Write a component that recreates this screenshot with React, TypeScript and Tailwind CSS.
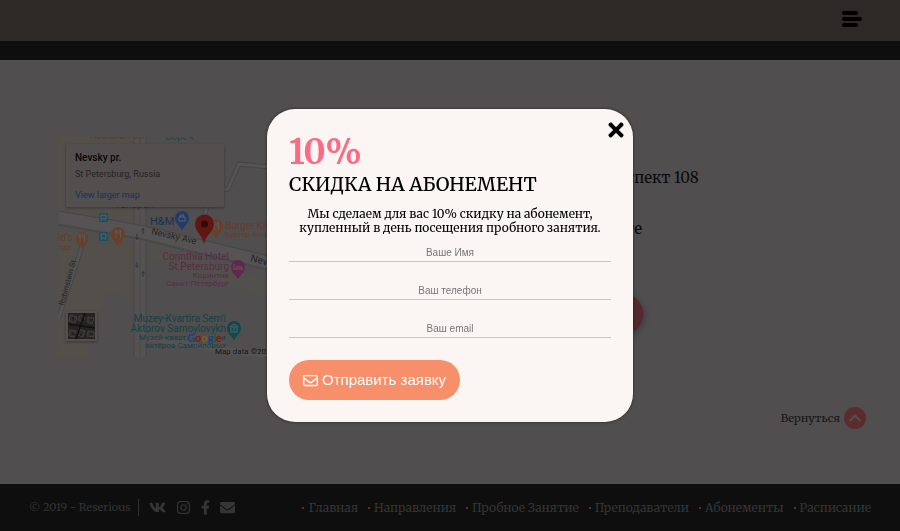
import type { ReactNode } from "react";
import { FaVk, FaInstagram, FaFacebookF, FaEnvelope, FaRegEnvelope, FaTimes, FaChevronUp } from "react-icons/fa";

const serif = "font-['Merriweather','DejaVu_Serif_Condensed','DejaVu_Serif',serif]";
const sans = "font-['Liberation_Sans',Arial,sans-serif]";

function Pin({ x, y, r, fill, children }: { x: number; y: number; r: number; fill: string; children?: ReactNode }) {
  return (
    <g transform={`translate(${x} ${y})`}>
      <path d={`M0 ${r * 1.75} C${-r * 0.3} ${r * 1.1} ${-r} ${r * 0.8} ${-r} 0 A${r} ${r} 0 0 1 ${r} 0 C${r} ${r * 0.8} ${r * 0.3} ${r * 1.1} 0 ${r * 1.75}Z`} fill={fill} />
      {children}
    </g>
  );
}

function Food() {
  return <path d="M-3 -4v3M-1 -4v3M-2 -4v8M-3 -1h2M2.500 4v-8c-2 1-2 3-1.500 4h1.500" stroke="#5d5654" strokeWidth="1" fill="none" />;
}

function Bus({ x, y }: { x: number; y: number }) {
  return (
    <g transform={`translate(${x} ${y})`}>
      <rect width="9" height="9" rx="1" fill="#1d4e5c" />
      <path d="M2 2h5v4h-5zM2.500 7v1M6.500 7v1" stroke="#58656a" strokeWidth="1" fill="none" />
    </g>
  );
}

function StreetMap() {
  return (
    <svg viewBox="58 137 280 220" className="h-[220px] w-[280px] shrink-0 font-[Roboto,sans-serif]" role="img" aria-label="Nevsky pr., St Petersburg">
      <defs>
        <clipPath id="map-area"><rect x="58" y="137" width="280" height="220" /></clipPath>
        <filter id="card-shadow" x="-10%" y="-20%" width="120%" height="150%">
          <feDropShadow dx="0" dy="1" stdDeviation="1.500" floodColor="#000" floodOpacity="0.35" />
        </filter>
      </defs>
      <g clipPath="url(#map-area)">
        <rect x="58" y="137" width="280" height="220" fill="#504e4e" />
        <path d="M58 137h76v96l-76-20zM58 228l76 22v50l-28-8-20 65H58z" fill="#53504b" />
        <path d="M147 240l120 40v18l-120-40z" fill="#52504c" />
        <g fill="none">
          <path d="M140 137V357" stroke="#474546" strokeWidth="13" />
          <path d="M140 137V357" stroke="#545253" strokeWidth="11" />
          <path d="M140 137V357" stroke="#4a4849" strokeWidth="1" />
          <path d="M58 218L140 232 338 280" stroke="#474546" strokeWidth="15" />
          <path d="M58 218L140 232 338 280" stroke="#555354" strokeWidth="13" />
          <path d="M58 224L140 238 338 286" stroke="#4b494a" strokeWidth="1" />
          <path d="M84 240L58 320M204 220L210 190 228 189 239 164 280 168" stroke="#474546" strokeWidth="5" />
          <path d="M84 240L58 320M204 220L210 190 228 189 239 164 280 168" stroke="#555354" strokeWidth="3" />
          <path d="M145 338L270 356" stroke="#555354" strokeWidth="6" />
        </g>
        <path d="M137 234v5m-1.500-1.500l1.500 2 1.500-2M143 234v-5m-1.500 1.500l1.500-2 1.500 2M137 262v5m-1.500-1.500l1.500 2 1.500-2M143 277v-5m-1.500 1.500l1.500-2 1.500 2" stroke="#33333b" fill="none" />
        <g fontSize="10">
          <text x="90" y="139" fill="#5b3c2c">Restoran Gp</text>
          <text x="165" y="140" fill="#24494d">Вореч</text>
          <text x="116" y="208" fill="#542944">Галерея</text>
        </g>

        <rect x="66" y="144" width="158" height="63" rx="1" fill="#525050" filter="url(#card-shadow)" />
        <text x="75" y="161" fontSize="10" fontWeight="500" fill="#080808">Nevsky pr.</text>
        <text x="75" y="177" fontSize="9" fill="#242323">St Petersburg, Russia</text>
        <text x="75" y="198" fontSize="9" fill="#17305b">View larger map</text>

        <Bus x={99} y={213} />
        <Bus x={99} y={232} />
        <text x="150" y="225" fontSize="11" fill="#1d2f52">H&amp;M</text>
        <Pin x={182} y={218} r={7} fill="#203c68"><path d="M-3 -1h6v4h-6zM-1.500 -1v-2h3v2" stroke="#59606d" fill="none" /></Pin>
        <Pin x={82} y={238} r={6} fill="#694027"><Food /></Pin>
        <Pin x={118} y={234} r={7} fill="#694027"><Food /></Pin>
        <Pin x={216} y={226} r={7} fill="#694027"><Food /></Pin>
        <text x="58" y="241" fontSize="10" fill="#633d29">ld's</text>
        <text x="58" y="250" fontSize="8" fill="#633d29">лдс</text>
        <text x="225" y="229" fontSize="10" fill="#633d29">Burger King</text>
        <text x="225" y="237" fontSize="8" fill="#633d29">Бургер Кинг</text>
        <text transform="translate(151 234) rotate(13)" fontSize="9" fill="#262626">Nevsky Ave</text>
        <text transform="translate(250 261) rotate(15)" fontSize="10" fill="#262626">Nevsky Ave</text>
        <path d="M204 244C202 234 195 232 195 224A9.500 9.500 0 0 1 214 224C214 232 206 234 204 244Z" fill="#601713" />
        <circle cx="204.500" cy="224" r="3.500" fill="#2d0908" />

        <g textAnchor="end" fill="#5b2b48">
          <text x="229" y="260" fontSize="10">Corinthia Hotel</text>
          <text x="229" y="270" fontSize="10">St Petersburg</text>
          <text x="229" y="278" fontSize="8">Коринтия</text>
          <text x="229" y="286" fontSize="8">Санкт-Петербург</text>
        </g>
        <Pin x={238} y={267} r={7} fill="#60294b"><path d="M-4 -3v6M-4 2h8v1.500M-2 0h6v2" stroke="#6b5263" fill="none" /></Pin>
        <text transform="translate(64 306) rotate(-75)" fontSize="8" fill="#292828">Rubinstein St</text>

        <g filter="url(#card-shadow)">
          <rect x="66" y="311" width="31" height="30" rx="1" fill="#525050" />
          <rect x="68" y="313" width="27" height="26" fill="#252424" />
          <path d="M70 315l7 2-2 6-6-2zM80 315l5 2-2 5-5-2zM88 317l6 1-2 6-5-2zM70 330l6 1-2 6-5-1zM79 329l6 2-2 6-6-2zM88 331l6 1v5l-7-1z" fill="#2f2d2d" stroke="#413e3d" strokeWidth="1" />
          <path d="M73 317v4M82 318l2 3M90 320h3M72 333l3 2M81 333v3M90 334h3" stroke="#151515" />
          <path d="M68 324l27 4M85 313l-9 26" stroke="#111" strokeWidth="1.500" />
        </g>

        <g fill="#134348">
          <text x="226" y="322" fontSize="10" textAnchor="end">Muzey-Kvartira Sem'i</text>
          <text x="226" y="332" fontSize="10" textAnchor="end">Aktorov Samoylovykh</text>
          <text x="139" y="340" fontSize="8">Музей-кварт</text>
          <text x="221" y="340" fontSize="8">и</text>
          <text x="226" y="348" fontSize="8" textAnchor="end">актёров Самойловых</text>
        </g>
        <Pin x={234} y={328} r={7} fill="#12484d"><path d="M-4 -1l4-3 4 3zM-3 3v-3M0 3v-3M3 3v-3M-4 4h8" stroke="#52666a" fill="none" /></Pin>
        <text x="187" y="342" fontSize="11" fontWeight="700" className="font-['Lato',sans-serif]">
          <tspan fill="#1d4080">G</tspan><tspan fill="#7a1b19">o</tspan><tspan fill="#806010">o</tspan><tspan fill="#1d4080">g</tspan><tspan fill="#1b602b">l</tspan><tspan fill="#7a1b19">e</tspan>
        </text>
        <text x="215" y="354" fontSize="8" fill="#151515">Map data ©2020 Google</text>
      </g>
    </svg>
  );
}

const links = ["Главная", "Направления", "Пробное Занятие", "Преподаватели", "Абонементы", "Расписание"];
const fields = [
  { id: "name", label: "Ваше Имя", type: "text" },
  { id: "phone", label: "Ваш телефон", type: "tel" },
  { id: "email", label: "Ваш email", type: "email" },
];

function DiscountDialog() {
  return (
    <div className="fixed inset-0 z-10 flex items-center justify-center">
      <section role="dialog" aria-modal="true" aria-labelledby="dialog-title" className="relative w-[366px] rounded-[28px] bg-[#fbf6f4] px-[22px] pt-6 pb-[22px] text-black shadow-[0_0_3px_#222]">
        <button aria-label="Закрыть" className="absolute top-2.5 right-1.5 text-[22px]"><FaTimes /></button>
        <h2 id="dialog-title">
          <span className="block text-[34px] leading-[38px] font-bold text-[#fb6b86]">10%</span>
          <span className="block text-[19px] leading-[26px] font-medium">СКИДКА НА АБОНЕМЕНТ</span>
        </h2>
        <p className="mt-2.5 text-center text-[12px] leading-[14px]">
          Мы сделаем для вас 10% скидку на абонемент,<br />купленный в день посещения пробного занятия.
        </p>
        <form className={`mt-[7px] ${sans}`}>
          {fields.map((f) => (
            <input key={f.id} id={f.id} type={f.type} aria-label={f.label} placeholder={f.label} className="mb-[18px] block h-5 w-full border-b border-[#c9c5c4] bg-transparent pt-0.5 text-center text-[10px] placeholder:text-[#777]" />
          ))}
          <button type="button" className="mt-[22px] flex h-10 items-center gap-1 rounded-full bg-[#f78f6a] px-3.5 text-[15px] text-white">
            <FaRegEnvelope /> Отправить заявку
          </button>
        </form>
      </section>
    </div>
  );
}

export default function App() {
  return (
    <div className={`flex min-h-screen flex-col bg-[#0e0e0e] ${serif}`}>
      <header className="mb-[19px] flex h-[41px] items-center justify-end bg-[#2d2926] pr-[38px] pb-1">
        <button aria-label="Меню" className="flex flex-col gap-[2px]">
          <span className="h-1 w-4 rounded-full bg-black" />
          <span className="h-1 w-5 rounded-full bg-black" />
          <span className="h-1 w-4 rounded-full bg-black" />
        </button>
      </header>

      <main className="flex flex-1 flex-col bg-[#504e4e] pt-[77px] text-[#0b0b0b]">
        <div className="flex gap-[190px] pl-[58px]">
          <StreetMap />
          <address className="pt-7 text-[15px] leading-[26px] not-italic">
            <p className="whitespace-nowrap">Невский проспект 108</p>
            <p className="mt-[25px]">Адрес на сайте</p>
            <button className={`mt-[52px] h-10 w-[115px] rounded-full bg-[#56272e] shadow-[1px_2px_6px_#3a3838] ${sans}`}>Записаться</button>
          </address>
        </div>
        <a href="#top" className="mt-auto mr-[34px] mb-[55px] flex items-center gap-1 self-end text-[11px] text-[#171616]">
          Вернуться
          <span className="flex size-[22px] items-center justify-center rounded-full bg-[#5c2c2c] text-[14px] text-[#504e4e]"><FaChevronUp /></span>
        </a>
      </main>

      <footer className="flex h-[47px] items-center justify-between px-[29px] text-[#353535]">
        <div className="flex items-center">
          <span className="mr-2.5 border-r border-[#303030] pr-2 text-[11px]">© 2019 - Reserious</span>
          <div className="flex items-center gap-2.5 text-[15px]">
            <a href="#vk" aria-label="ВКонтакте"><FaVk className="text-[17px]" /></a>
            <a href="#instagram" aria-label="Instagram"><FaInstagram /></a>
            <a href="#facebook" aria-label="Facebook"><FaFacebookF className="w-[9px]" /></a>
            <a href="#mail" aria-label="Email"><FaEnvelope /></a>
          </div>
        </div>
        <nav className="flex gap-2.5 text-[12px]">
          {links.map((l) => (
            <a key={l} href="#top" className="flex items-center gap-1 whitespace-nowrap">
              <span className="size-[2px] rounded-full bg-[#753a35]" />{l}
            </a>
          ))}
        </nav>
      </footer>
      <DiscountDialog />
    </div>
  );
}
